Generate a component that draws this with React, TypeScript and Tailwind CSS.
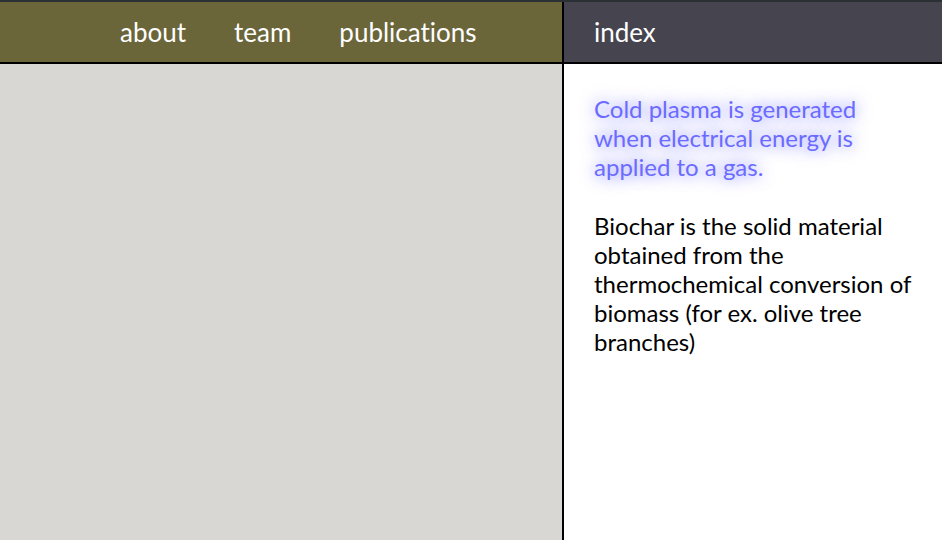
export default function App() {
  return (
    <div className="flex h-[540px] w-[942px] flex-col overflow-hidden bg-white font-['Lato',sans-serif] [font-variant-ligatures:none]">
      <header className="flex h-16 border-y-2 border-t-[#2b3035] border-b-black">
        <nav className="flex w-[564px] items-center gap-12 border-r-2 border-black bg-[#6b653a] pl-[120px] text-[26px] text-white">
          <span>about</span>
          <span>team</span>
          <span>publications</span>
        </nav>
        <div className="flex flex-1 items-center bg-[#45444f] pl-[30px] text-[26px] text-white">
          index
        </div>
      </header>
      <main className="flex flex-1">
        <div className="w-[564px] border-r-2 border-black bg-[#d8d7d3]" />
        <div className="flex-1 pl-[30px] pr-[24px] pt-[30px] text-[24px] leading-[29px]">
          <p className="text-[#6b6bff] [text-shadow:0_0_16px_#6b6bff]">
            Cold plasma is generated when electrical energy is applied to a gas.
          </p>
          <p className="mt-[30px] text-black">
            Biochar is the solid material obtained from the thermochemical
            conversion of biomass (for ex. olive tree branches)
          </p>
        </div>
      </main>
    </div>
  )
}
